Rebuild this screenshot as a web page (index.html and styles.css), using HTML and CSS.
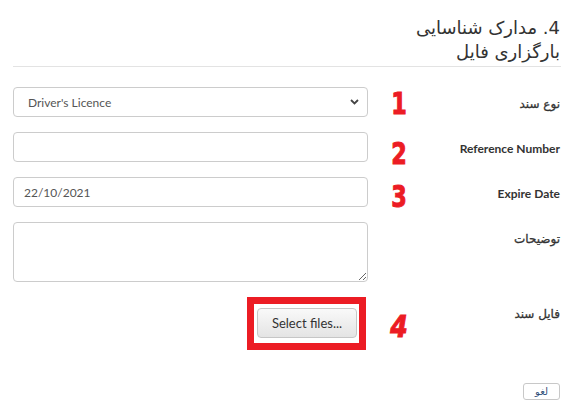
FILE: index.html
```html
<!DOCTYPE html>
<html lang="fa">
<head>
<meta charset="utf-8">
<title>مدارک شناسایی</title>
<link rel="stylesheet" href="styles.css">
</head>
<body>
<div class="page" dir="rtl">
  <h3 class="title">4. مدارک شناسایی</h3>
  <h3 class="title">بارگزاری فایل</h3>
  <div class="rule"></div>
  <form class="form">
    <div class="row">
      <label class="lbl lbl-fa">نوع سند</label>
      <span class="num n1">1</span>
      <div class="field" dir="ltr">
        <div class="select-wrap">
          <select class="ctl select"><option>Driver's Licence</option></select>
          <svg class="chev" width="9" height="6" viewBox="0 0 9 6"><path d="M1 1 L4.5 4.5 L8 1" fill="none" stroke="#444" stroke-width="1.8"/></svg>
        </div>
      </div>
    </div>
    <div class="row">
      <label class="lbl">Reference Number</label>
      <span class="num n2">2</span>
      <div class="field" dir="ltr"><input class="ctl" type="text" value=""></div>
    </div>
    <div class="row">
      <label class="lbl">Expire Date</label>
      <span class="num n3">3</span>
      <div class="field" dir="ltr"><input class="ctl" type="text" value="22/10/2021"></div>
    </div>
    <div class="row">
      <label class="lbl lbl-fa">توضیحات</label>
      <span class="num"></span>
      <div class="field" dir="ltr"><textarea class="ctl area"></textarea></div>
    </div>
    <div class="row last">
      <label class="lbl lbl-fa">فایل سند</label>
      <span class="num n4">4</span>
      <div class="field file-field">
        <div class="highlight"><button type="button" class="select-btn" dir="ltr">Select files...</button></div>
      </div>
    </div>
  </form>
  <div class="actions"><button type="button" class="cancel">لغو</button></div>
</div>
</body>
</html>
```
FILE: styles.css
```css
html, body {
  margin: 0;
  padding: 0;
  background: #fff;
}
.page {
  width: 577px;
  height: 410px;
  font-family: Lato, "DejaVu Sans", sans-serif;
  color: #333;
  overflow: hidden;
}
.title {
  margin: 0 17px 0 0;
  font-family: "DejaVu Sans", sans-serif;
  font-weight: normal;
  font-size: 18px;
  line-height: 24px;
  color: #333;
}
.title:first-child {
  padding-top: 16px;
}
.rule {
  height: 1px;
  background: #e3e3e3;
  margin: 2px 16px 0 13px;
}
.form {
  margin: 20px 17px 0 13px;
}
.row {
  display: flex;
  align-items: flex-start;
  margin-bottom: 15px;
}
.row.last {
  margin-bottom: 0;
}
.lbl {
  width: 150px;
  flex: none;
  padding-top: 7px;
  font-size: 12px;
  line-height: 20px;
  font-weight: bold;
  color: #333;
  font-family: Lato, "DejaVu Sans", sans-serif;
}
.lbl-fa {
  font-weight: normal;
  font-family: "DejaVu Sans", sans-serif;
  -webkit-text-stroke: 0.3px #333;
}
.num {
  width: 22px;
  height: 30px;
  flex: none;
  text-align: center;
  font-family: "DejaVu Sans Condensed", "DejaVu Sans", sans-serif;
  font-weight: bold;
  font-size: 31px;
  line-height: 30px;
  color: #ec1c24;
  -webkit-text-stroke: 1px #ec1c24;
  transform: scaleX(0.8);
}
.n1 { transform: translateY(1px) scaleX(0.8); }
.n2 { transform: translateY(6px) scaleX(0.8); }
.n3 { transform: translateY(4px) scaleX(0.8); }
.n4 { font-style: italic; transform: translateY(14px) scaleX(0.9); }
.field {
  width: 355px;
  flex: none;
  margin-right: 20px;
}
.ctl {
  display: block;
  box-sizing: border-box;
  width: 355px;
  height: 30px;
  margin: 0;
  border: 1px solid #ccc;
  border-radius: 4px;
  padding: 0 10px;
  font-family: Lato, sans-serif;
  font-size: 12px;
  color: #555;
  background: #fff;
  outline: none;
}
.select-wrap {
  position: relative;
}
.select {
  -webkit-appearance: none;
  appearance: none;
  padding-left: 14px;
}
.chev {
  position: absolute;
  right: 9px;
  top: 12px;
}
.area {
  height: 60px;
  padding: 6px 10px;
  resize: vertical;
}
.file-field {
  display: flex;
  justify-content: flex-start;
}
.highlight {
  margin-right: 2px;
  border: 7px solid #ec1c24;
  padding: 4px 2px 5px 3px;
}
.select-btn {
  display: block;
  width: 100px;
  height: 30px;
  margin: 0;
  border: 1px solid #c6c6c6;
  border-radius: 4px;
  background: linear-gradient(#f9f9f9, #e4e4e4);
  font-family: Lato, sans-serif;
  font-size: 13px;
  color: #333;
  padding: 0;
}
.actions {
  margin: 33px 17px 0 0;
  display: flex;
}
.cancel {
  width: 37px;
  height: 17px;
  padding: 0;
  border: 1px solid #c8c8c8;
  border-radius: 3px;
  background: #fff;
  font-family: "DejaVu Sans", sans-serif;
  font-size: 10px;
  line-height: 14px;
  color: #2f4f7a;
}
```
